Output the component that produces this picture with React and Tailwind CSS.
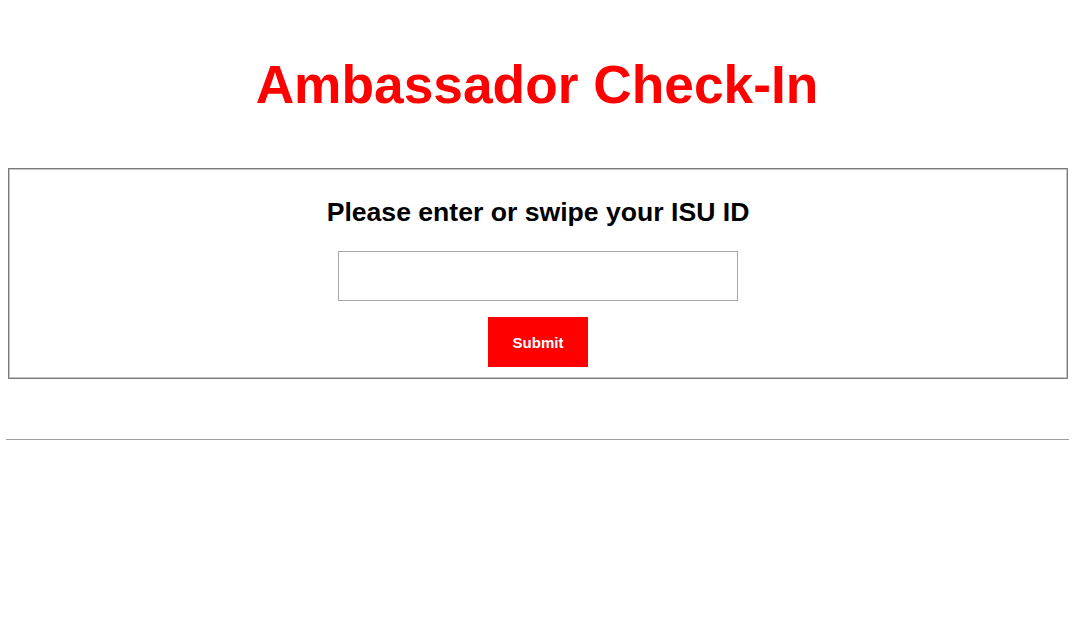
import React, { useState } from "react";

function App() {
  const [isuId, setIsuId] = useState("");

  return (
    <div className="min-h-[627px] bg-white font-['Liberation_Sans',Arial,sans-serif]">
      {/* Header */}
      <div className="pt-[58px]">
        <h1 className="text-center text-[53.3px] leading-none font-bold text-[#ff0000]">
          Ambassador Check-In
        </h1>
      </div>

      {/* Check-in form */}
      <form
        onSubmit={(e) => e.preventDefault()}
        className="ml-2 mr-[6px] mt-[57px] border border-[#7a7a7a] shadow-[inset_0_0_0_1px_#c4c4c4] p-px"
      >
        <div className="flex flex-col items-center pt-[29px] pb-[10px]">
          <h2 className="text-[26.6px] leading-none font-bold text-black">
            Please enter or swipe your ISU ID
          </h2>
          <input
            type="text"
            value={isuId}
            onChange={(e) => setIsuId(e.target.value)}
            className="mt-[25px] w-[400px] h-[50px] border border-[#a9a9a9] bg-white px-2 outline-none"
          />
          <button
            type="submit"
            className="mt-4 w-[100px] h-[50px] pt-[2px] bg-[#ff0000] text-white text-[15px] font-bold"
          >
            Submit
          </button>
        </div>
      </form>

      <hr className="ml-[6px] mr-[5px] mt-[60px] border-0 border-t border-[#a0a0a0]" />
    </div>
  );
}

export default App;
